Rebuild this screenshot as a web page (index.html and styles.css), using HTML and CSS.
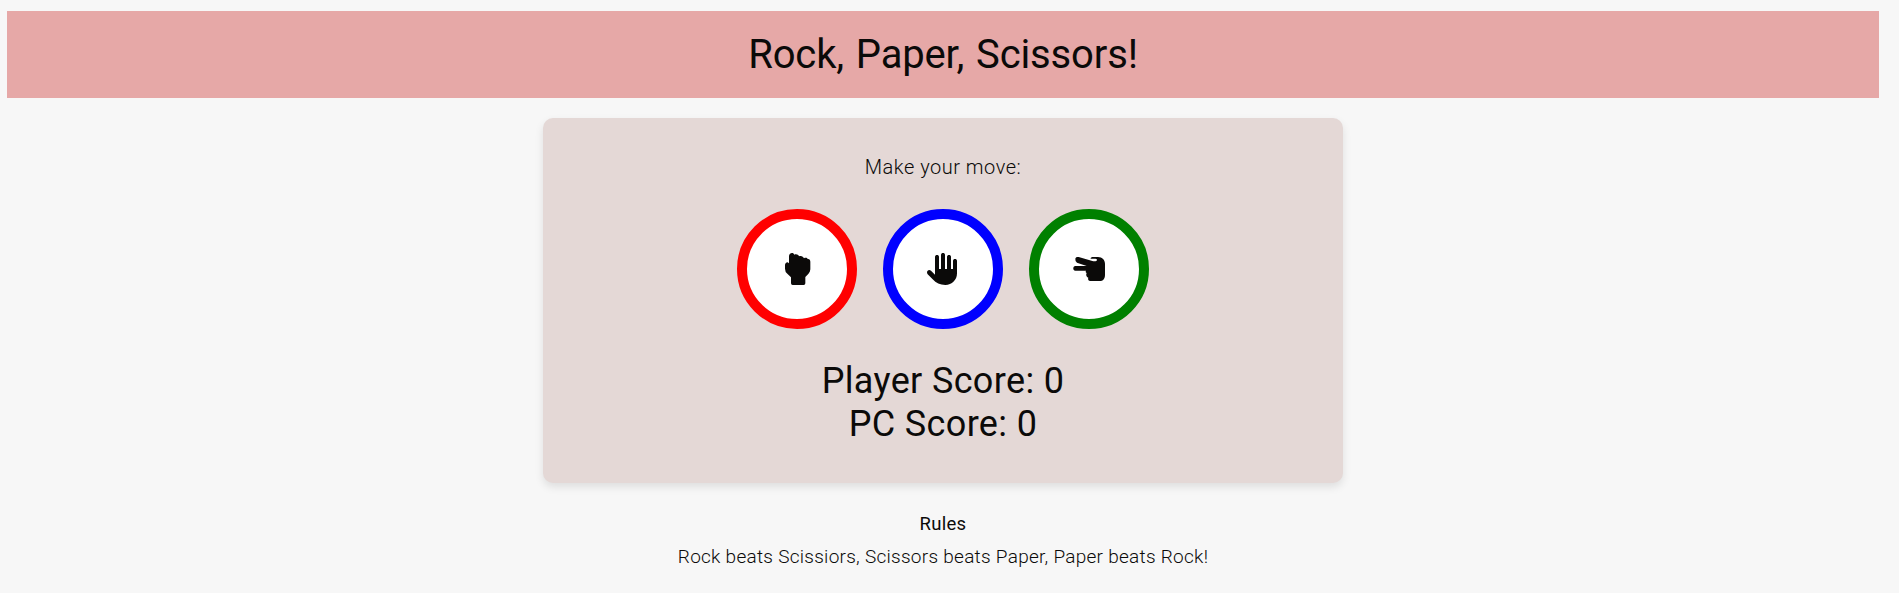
FILE: index.html
```html
<!DOCTYPE html>
<html lang="en">
<head>
<meta charset="utf-8">
<title>Rock, Paper, Scissors!</title>
<link rel="stylesheet" href="styles.css">
</head>
<body>
<header class="header"><h1 class="title">Rock, Paper, Scissors!</h1></header>
<main class="card">
  <p class="prompt">Make your move:</p>
  <div class="moves">
    <button class="move rock" aria-label="Rock">
      <svg class="icon" viewBox="0 0 102 102"><path d="M27 13C27 1 41 0 43 8C49 5 56 8 57 13C63 10 70 13 72 19C77 16 82 18 83 21C88 20 91 24 91 29V52C91 62 83 69 76 75V94Q76 99 71 99H38Q33 99 33 94V76L22 65Q15 59 15 50V40Q15 32 23 31L27 34Z"/></svg>
    </button>
    <button class="move paper" aria-label="Paper">
      <svg class="icon" viewBox="0 0 102 102"><path d="M27 15C27 7 39 7 39 15V51H45V9C45 1 57 1 57 9V51H63V15C63 7 75 7 75 15V51H81V27C81 19 93 19 93 27V64C93 84 78 99 58 99C42 99 30 93 20 82L5 67C-1 58 8 50 15 56L27 68Z"/></svg>
    </button>
    <button class="move scissors" aria-label="Scissors">
      <svg class="icon" viewBox="0 0 102 102"><path d="M10 20C11 15 15 14 20 15L61 27C69 29 75 27 75 23C74 19 68 20 61 20H56V18L60 15H78C91 15 99 24 99 36V68C99 80 93 87 83 87H55C49 87 47 81 49 77C43 75 41 68 44 63C40 61 41 58 42 56H10C2 56 2 42 10 42H44L15 32Q9 28 10 20Z"/></svg>
    </button>
  </div>
  <div class="scores">
    <p class="score player">Player Score: 0</p>
    <p class="score pc">PC Score: 0</p>
  </div>
</main>
<footer class="rules">
  <h2 class="rules-title">Rules</h2>
  <p class="rules-text">Rock beats Scissiors, Scissors beats Paper, Paper beats Rock!</p>
</footer>
</body>
</html>
```
FILE: styles.css
```css
* { box-sizing: border-box; }
body {
  margin: 0;
  padding: 11px 20px 0 7px;
  background: #f7f7f7;
  color: #0b0a09;
  font-family: Roboto, sans-serif;
  text-align: center;
}
h1, h2, p { margin: 0; font-weight: 400; white-space: nowrap; }
.header { height: 87px; padding-top: 21px; background: #e6a8a7; }
.title { font-size: 40px; line-height: 46px; letter-spacing: -.15px; word-spacing: 2px; }
.card {
  width: 800px;
  height: 365px;
  margin: 20px auto 0;
  padding-top: 37px;
  border-radius: 10px;
  background: #e4d8d6;
  box-shadow: 0 4px 8px rgba(0, 0, 0, .1);
}
.prompt { font-size: 20px; line-height: 24px; font-weight: 300; letter-spacing: .5px; }
.moves { display: flex; justify-content: center; gap: 26px; margin-top: 30px; }
.move {
  display: flex;
  align-items: center;
  justify-content: center;
  width: 120px;
  height: 120px;
  padding: 0;
  border: 10px solid;
  border-radius: 50%;
  background: #fff;
}
.rock { border-color: #f00; }
.paper { border-color: #00f; }
.scissors { border-color: #008000; }
.icon { width: 34px; height: 34px; fill: #0b0a09; }
.scores { margin-top: 31px; }
.score { font-size: 36px; line-height: 43px; letter-spacing: .35px; }
.rules { margin-top: 30px; }
.rules-title { font-size: 18.5px; line-height: 22px; letter-spacing: .3px; }
.rules-text { margin-top: 11px; font-size: 19px; line-height: 22px; font-weight: 300; letter-spacing: .27px; }
```
